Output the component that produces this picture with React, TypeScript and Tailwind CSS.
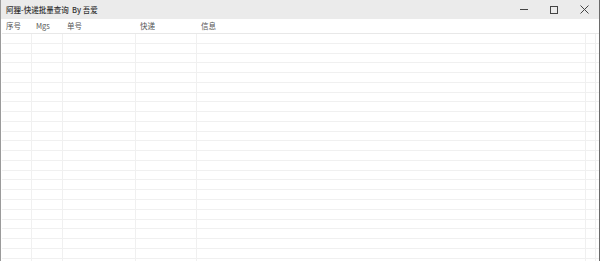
import React from "react";

// Batch express-tracking window: title bar + empty list grid.
const columns = [
  { label: "序号", w: 30 },
  { label: "Mgs", w: 31 },
  { label: "单号", w: 73 },
  { label: "快递", w: 61 },
  { label: "信息", w: 389 },
  { label: "", w: 10 },
];

const rows = Array.from({ length: 24 }, (_, i) => i);

export default function App() {
  return (
    <div
      className="flex h-[261px] w-[600px] flex-col overflow-hidden border-l border-r border-l-[#9a9a9a] border-r-[#6a6a6a] bg-white"
      style={{ fontFamily: '"Noto Sans CJK SC", "Liberation Sans", sans-serif' }}
    >
      <div className="flex h-[19px] shrink-0 items-center bg-[#ebebeb]">
        <span className="pl-[5px] text-[7.5px] font-medium leading-none text-[#333]">
          阿狸-快递批量查询&nbsp;&nbsp;By 吾爱
        </span>
        <div className="ml-auto flex h-full">
          <div className="flex w-[30px] items-center justify-center">
            <div className="h-px w-[8px] bg-[#444]" />
          </div>
          <div className="flex w-[30px] items-center justify-center">
            <div className="h-[8px] w-[8px] border border-[#444]" />
          </div>
          <div className="flex w-[30px] items-center justify-center">
            <svg width="9" height="9" viewBox="0 0 9 9">
              <path d="M0.5 0.5L8.5 8.5M8.5 0.5L0.5 8.5" stroke="#444" strokeWidth="1" />
            </svg>
          </div>
        </div>
      </div>

      <div className="flex-1 pl-[1px]">
        <div className="flex h-[15px] border-b border-[#e8e8e8]">
          {columns.map((c, i) => (
            <div
              key={i}
              className="flex items-center pl-[4px] text-[7.5px] leading-none text-[#555]"
              style={{ width: c.w }}
            >
              {c.label}
            </div>
          ))}
        </div>
        {rows.map((r) => (
          <div key={r} className="flex h-[9.77px] border-b border-[#f0f0f0]">
            {columns.map((c, i) => (
              <div
                key={i}
                className="h-full border-r border-[#f0f0f0]"
                style={{ width: c.w }}
              />
            ))}
          </div>
        ))}
      </div>
    </div>
  );
}
